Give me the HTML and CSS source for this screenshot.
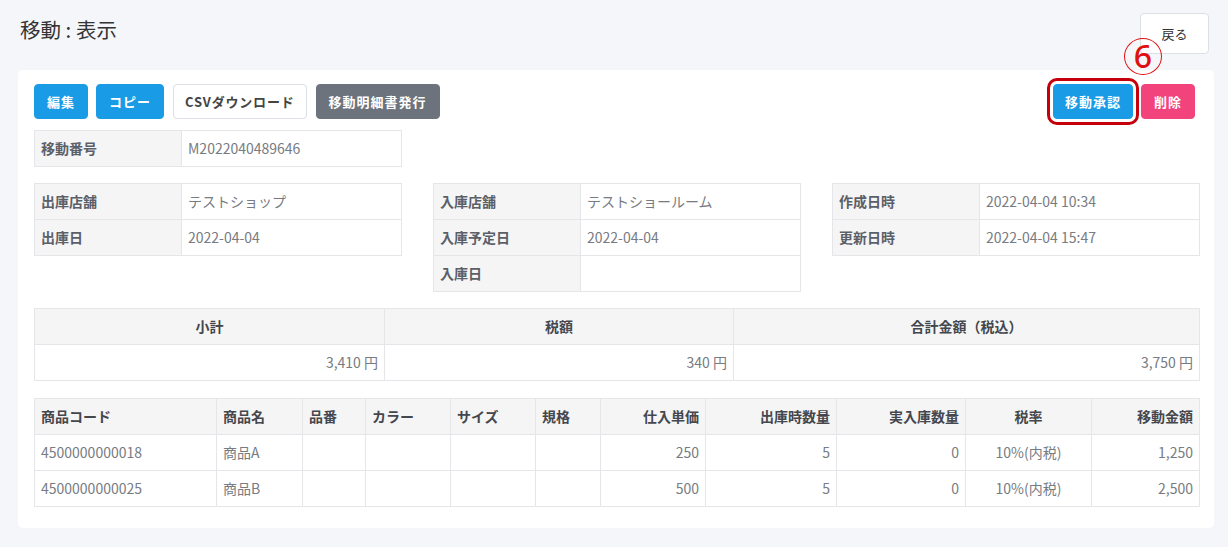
FILE: index.html
```html
<!DOCTYPE html>
<html lang="ja">
<head>
<meta charset="utf-8">
<title>移動 : 表示</title>
<link rel="stylesheet" href="styles.css">
</head>
<body>
<div class="page">
  <header class="page-header">
    <h1 class="page-title">移動 : 表示</h1>
    <button class="btn btn-back">戻る</button>
  </header>

  <main class="card">
    <div class="toolbar">
      <div class="toolbar-left">
        <button class="btn btn-primary">編集</button>
        <button class="btn btn-primary">コピー</button>
        <button class="btn btn-outline">CSVダウンロード</button>
        <button class="btn btn-secondary">移動明細書発行</button>
      </div>
      <div class="toolbar-right">
        <span class="highlight-wrap">
          <button class="btn btn-primary btn-highlight">移動承認</button>
          <span class="step-badge">6</span>
        </span>
        <button class="btn btn-danger">削除</button>
      </div>
    </div>

    <div class="info-grid">
      <table class="info-table">
        <tr><th>移動番号</th><td>M2022040489646</td></tr>
      </table>
    </div>

    <div class="info-grid info-grid-3">
      <table class="info-table">
        <tr><th>出庫店舗</th><td>テストショップ</td></tr>
        <tr><th>出庫日</th><td>2022-04-04</td></tr>
      </table>
      <table class="info-table">
        <tr><th>入庫店舗</th><td>テストショールーム</td></tr>
        <tr><th>入庫予定日</th><td>2022-04-04</td></tr>
        <tr><th>入庫日</th><td></td></tr>
      </table>
      <table class="info-table">
        <tr><th>作成日時</th><td>2022-04-04 10:34</td></tr>
        <tr><th>更新日時</th><td>2022-04-04 15:47</td></tr>
      </table>
    </div>

    <table class="data-table totals-table">
      <colgroup>
        <col class="c-sub"><col class="c-tax"><col class="c-total">
      </colgroup>
      <thead>
        <tr><th class="center">小計</th><th class="center">税額</th><th class="center">合計金額（税込）</th></tr>
      </thead>
      <tbody>
        <tr><td class="right">3,410 円</td><td class="right">340 円</td><td class="right">3,750 円</td></tr>
      </tbody>
    </table>

    <table class="data-table items-table">
      <colgroup>
        <col class="c-code"><col class="c-name"><col class="c-no"><col class="c-color"><col class="c-size">
        <col class="c-spec"><col class="c-price"><col class="c-out"><col class="c-in"><col class="c-rate"><col class="c-amount">
      </colgroup>
      <thead>
        <tr>
          <th>商品コード</th><th>商品名</th><th>品番</th><th>カラー</th><th>サイズ</th><th>規格</th>
          <th class="right">仕入単価</th><th class="right">出庫時数量</th><th class="right">実入庫数量</th>
          <th class="center">税率</th><th class="right">移動金額</th>
        </tr>
      </thead>
      <tbody>
        <tr>
          <td>4500000000018</td><td>商品A</td><td></td><td></td><td></td><td></td>
          <td class="right">250</td><td class="right">5</td><td class="right">0</td>
          <td class="center">10%(内税)</td><td class="right">1,250</td>
        </tr>
        <tr>
          <td>4500000000025</td><td>商品B</td><td></td><td></td><td></td><td></td>
          <td class="right">500</td><td class="right">5</td><td class="right">0</td>
          <td class="center">10%(内税)</td><td class="right">2,500</td>
        </tr>
      </tbody>
    </table>
  </main>
</div>
</body>
</html>
```

FILE: styles.css
```css
* { box-sizing: border-box; }

html, body {
  margin: 0;
  padding: 0;
  background: #f4f6f9;
  font-family: "Noto Sans CJK JP", "Noto Sans", sans-serif;
  font-size: 14px;
  color: #333;
}

.page {
  padding: 13px 19px 20px 18px;
}

.page-header {
  display: flex;
  justify-content: space-between;
  align-items: flex-start;
  margin-bottom: 16px;
}

.page-title {
  margin: 4px 0 0 2px;
  font-size: 20.5px;
  font-weight: 400;
  line-height: 24px;
  color: #333;
}

.btn {
  font-family: inherit;
  border: 1px solid transparent;
  border-radius: 4px;
  height: 35px;
  padding: 0 12px;
  font-size: 13px;
  font-weight: 700;
  letter-spacing: 1px;
  color: #fff;
  cursor: pointer;
  line-height: 1;
}

.btn-back {
  height: 41px;
  width: 69px;
  padding: 0;
  background: #fff;
  border-color: #dcdfe4;
  color: #333;
  font-weight: 400;
  font-size: 13px;
  letter-spacing: 0;
}

.card {
  width: 1196px;
  background: #fff;
  border-radius: 5px;
  padding: 14px 14px 21px 16px;
}

.toolbar {
  display: flex;
  justify-content: space-between;
  align-items: center;
  margin-bottom: 11px;
}

.toolbar-left, .toolbar-right {
  display: flex;
  align-items: center;
}

.toolbar-left .btn + .btn { margin-left: 9px; }
.toolbar-left .btn:nth-child(2) { margin-left: 8px; }

.btn-outline { letter-spacing: 0.8px; padding: 0 11px; }

.toolbar-right { margin-right: 5px; gap: 8px; }

.btn-primary { background: #1a9be6; border-color: #1a9be6; }
.btn-secondary { background: #6c737c; border-color: #6c737c; }
.btn-danger { background: #f2437d; border-color: #f2437d; }
.btn-outline { background: #fff; border-color: #dcdfe4; color: #444; }

.highlight-wrap {
  position: relative;
  display: inline-flex;
}

.btn-highlight {
  padding: 0 11px;
  outline: 3px solid #c5000b;
  outline-offset: 3px;
}

.step-badge {
  position: absolute;
  left: 71px;
  top: -46px;
  width: 38px;
  height: 37px;
  border: 1.5px solid #e01010;
  border-radius: 50%;
  color: #e01010;
  font-size: 32px;
  font-weight: 500;
  line-height: 33px;
  text-align: center;
  font-family: "Noto Sans", "Noto Sans CJK JP", sans-serif;
}

.info-grid {
  display: grid;
  grid-template-columns: repeat(3, 1fr);
  column-gap: 31px;
  align-items: start;
  margin-bottom: 16px;
}

table {
  border-collapse: collapse;
  width: 100%;
}

.info-table {
  table-layout: fixed;
}

.info-table th, .info-table td,
.data-table th, .data-table td {
  border: 1px solid #e4e6ea;
  height: 36px;
  padding: 6px 6px;
  line-height: 21px;
  font-size: 14px;
  text-align: left;
  white-space: nowrap;
}

.info-table th {
  width: 147px;
  background: #f5f5f6;
  font-weight: 700;
  color: #5b5f68;
}

.info-table td {
  color: #777b82;
  font-weight: 400;
}

.data-table {
  table-layout: fixed;
  margin-bottom: 17px;
}

.data-table:last-child { margin-bottom: 0; }

.data-table th {
  background: #f5f5f6;
  font-weight: 700;
  color: #44474d;
}

.data-table td {
  color: #777b82;
}

.data-table .right { text-align: right; }
.data-table .center { text-align: center; }

.c-sub { width: 350px; }
.c-tax { width: 349px; }
.c-total { width: 466px; }

.c-code { width: 182px; }
.c-name { width: 86px; }
.c-no { width: 63px; }
.c-color { width: 85px; }
.c-size { width: 85px; }
.c-spec { width: 65px; }
.c-price { width: 105px; }
.c-out { width: 131px; }
.c-in { width: 129px; }
.c-rate { width: 126px; }
.c-amount { width: 108px; }
```
